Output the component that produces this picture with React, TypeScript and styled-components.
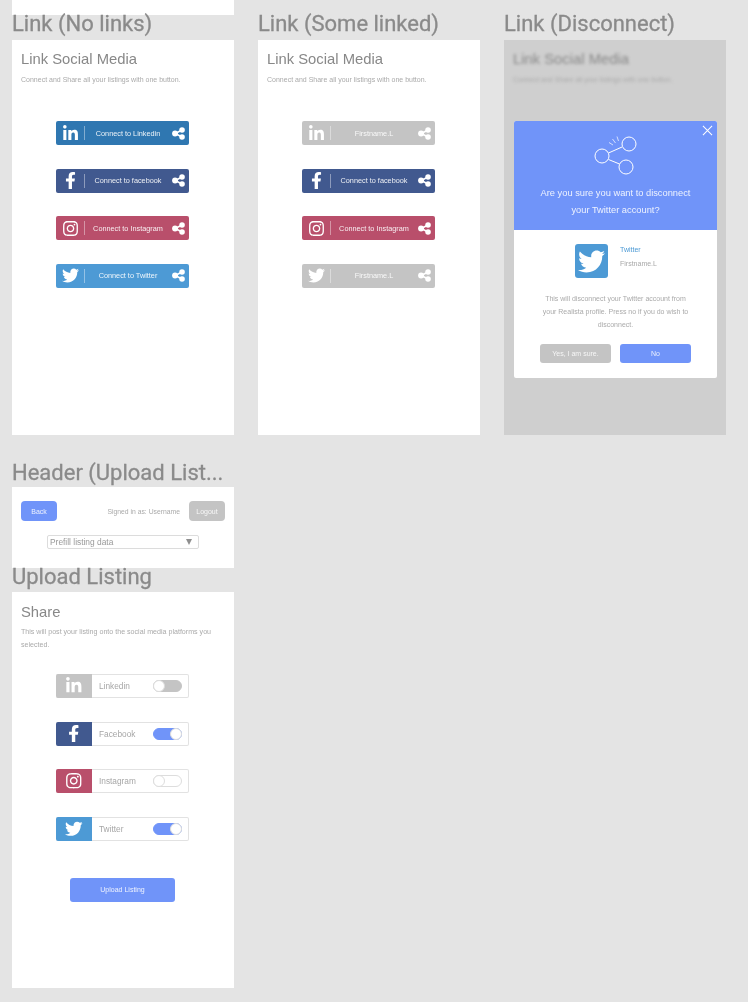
import React from "react";
import styled, { createGlobalStyle } from "styled-components";
import { FaLinkedinIn, FaFacebookF, FaInstagram, FaTwitter } from "react-icons/fa";

const GlobalStyle = createGlobalStyle`
  html, body {
    margin: 0;
    padding: 0;
    background: #e4e4e4;
  }
  body {
    font-family: "Liberation Sans", Arial, sans-serif;
  }
`;

const colors = {
  linkedin: "#2f77b1",
  facebook: "#41598f",
  instagram: "#b94f6b",
  twitter: "#4d9ad5",
  muted: "#c4c4c4",
  primary: "#7094f9",
};

type Network = "linkedin" | "facebook" | "instagram" | "twitter";

const icons = {
  linkedin: FaLinkedinIn,
  facebook: FaFacebookF,
  instagram: FaInstagram,
  twitter: FaTwitter,
};

const ShareGlyph = () => (
  <ShareSvg viewBox="0 0 14 14">
    <path d="M3.5 7 L10.8 3.2 M3.5 7 L10.8 10.8" stroke="#fff" strokeWidth="1.8" />
    <circle cx="3.3" cy="7" r="3.2" fill="#fff" />
    <circle cx="10.8" cy="3.2" r="3" fill="#fff" />
    <circle cx="10.8" cy="10.8" r="3" fill="#fff" />
  </ShareSvg>
);

const LinkButton = ({
  network,
  label,
  linked,
}: {
  network: Network;
  label: string;
  linked?: boolean;
}) => {
  const Icon = icons[network];
  return (
    <ConnectButton $bg={linked ? colors.muted : colors[network]}>
      <IconSlot>
        <Icon />
      </IconSlot>
      <Divider />
      <ConnectLabel>{label}</ConnectLabel>
      <ShareGlyph />
    </ConnectButton>
  );
};

const ToggleRow = ({
  network,
  label,
  state,
}: {
  network: Network;
  label: string;
  state: "off" | "on" | "empty";
}) => {
  const Icon = icons[network];
  return (
    <ShareRow>
      <ShareTile $bg={state === "off" ? colors.muted : colors[network]}>
        <Icon />
      </ShareTile>
      <ShareName>{label}</ShareName>
      <Toggle $state={state}>
        <Knob $on={state === "on"} />
      </Toggle>
    </ShareRow>
  );
};

const Intro = () => (
  <>
    <Title>Link Social Media</Title>
    <Subtitle>Connect and Share all your listings with one button.</Subtitle>
  </>
);

const App = () => (
  <>
    <GlobalStyle />
    <Page>
      <TopStub />
      <TopRow>
        <Column>
          <BoardLabel>Link (No links)</BoardLabel>
          <Board>
            <Intro />
            <ButtonStack>
              <LinkButton network="linkedin" label="Connect to Linkedin" />
              <LinkButton network="facebook" label="Connect to facebook" />
              <LinkButton network="instagram" label="Connect to Instagram" />
              <LinkButton network="twitter" label="Connect to Twitter" />
            </ButtonStack>
          </Board>
        </Column>
        <Column>
          <BoardLabel>Link (Some linked)</BoardLabel>
          <Board>
            <Intro />
            <ButtonStack>
              <LinkButton network="linkedin" label="Firstname.L" linked />
              <LinkButton network="facebook" label="Connect to facebook" />
              <LinkButton network="instagram" label="Connect to Instagram" />
              <LinkButton network="twitter" label="Firstname.L" linked />
            </ButtonStack>
          </Board>
        </Column>
        <Column>
          <BoardLabel>Link (Disconnect)</BoardLabel>
          <DimBoard>
            <Blurred>
              <Intro />
            </Blurred>
            <Modal>
              <ModalHead>
                <CloseIcon viewBox="0 0 12 12">
                  <path d="M1 1 L11 11 M11 1 L1 11" stroke="#fff" strokeWidth="1.1" />
                </CloseIcon>
                <ShareArt viewBox="0 0 44 42" fill="none" stroke="#fff" strokeWidth="1">
                  <circle cx="8" cy="22" r="7" />
                  <circle cx="35" cy="10" r="7" />
                  <circle cx="32" cy="33" r="7" />
                  <path d="M14.5 19 L28 13 M14.5 25.5 L25.5 30" />
                  <path d="M15 8.5 L19 11 M18.5 5 L21.5 9 M23 2.5 L24.5 7" strokeWidth="0.7" />
                </ShareArt>
                <ModalQuestion>
                  Are you sure you want to disconnect
                  <br />
                  your Twitter account?
                </ModalQuestion>
              </ModalHead>
              <ModalBody>
                <AccountRow>
                  <AccountTile>
                    <FaTwitter />
                  </AccountTile>
                  <AccountText>
                    <AccountNetwork>Twitter</AccountNetwork>
                    <AccountName>Firstname.L</AccountName>
                  </AccountText>
                </AccountRow>
                <ModalCopy>
                  This will disconnect your Twitter account from
                  <br />
                  your Realista profile. Press no if you do wish to
                  <br />
                  disconnect.
                </ModalCopy>
                <ModalActions>
                  <PillButton $bg={colors.muted}>Yes, I am sure.</PillButton>
                  <PillButton $bg={colors.primary}>No</PillButton>
                </ModalActions>
              </ModalBody>
            </Modal>
          </DimBoard>
        </Column>
      </TopRow>

      <Column>
        <SecondLabel>Header (Upload List...</SecondLabel>
        <HeaderBoard>
          <HeaderBar>
            <SmallButton $bg={colors.primary}>Back</SmallButton>
            <SignedIn>Signed in as: Username</SignedIn>
            <SmallButton $bg={colors.muted}>Logout</SmallButton>
          </HeaderBar>
          <PrefillSelect>
            <span>Prefill listing data</span>
            <Caret />
          </PrefillSelect>
        </HeaderBoard>
        <UploadLabel>Upload Listing</UploadLabel>
        <UploadBoard>
          <ShareTitle>Share</ShareTitle>
          <ShareCopy>
            This will post your listing onto the social media platforms you selected.
          </ShareCopy>
          <ShareStack>
            <ToggleRow network="linkedin" label="Linkedin" state="off" />
            <ToggleRow network="facebook" label="Facebook" state="on" />
            <ToggleRow network="instagram" label="Instagram" state="empty" />
            <ToggleRow network="twitter" label="Twitter" state="on" />
          </ShareStack>
          <UploadButton>Upload Listing</UploadButton>
        </UploadBoard>
      </Column>
    </Page>
  </>
);

export default App;

// transparent layer: keeps small text on greyscale antialiasing like the mockup export
const Page = styled.div`
  width: 748px;
  height: 1002px;
  box-sizing: border-box;
  padding-left: 12px;
  overflow: hidden;
  will-change: transform;
`;

const TopStub = styled.div`
  width: 222px;
  height: 15px;
  background: #ffffff;
`;

const TopRow = styled.div`
  display: grid;
  grid-template-columns: repeat(3, 222px);
  column-gap: 24px;
`;

const Column = styled.div`
  width: 222px;
  display: flex;
  flex-direction: column;
`;

const BoardLabel = styled.div`
  height: 25px;
  font-family: Roboto, sans-serif;
  font-size: 22px;
  line-height: 18px;
  color: #8a8a8a;
  white-space: nowrap;
  -webkit-text-stroke: 0.3px #8a8a8a;
`;

const SecondLabel = styled(BoardLabel)`
  margin-top: 25px;
  height: 27px;
  line-height: 25px;
`;

const UploadLabel = styled(BoardLabel)`
  height: 24px;
`;

const Board = styled.div`
  height: 395px;
  box-sizing: border-box;
  padding: 12px 9px 0;
  background: #ffffff;
`;

const UploadBoard = styled(Board)`
  height: 396px;
`;

const DimBoard = styled(Board)`
  position: relative;
  background: #cfcfcf;
`;

const Blurred = styled.div`
  filter: blur(1.5px);
`;

const Title = styled.div`
  font-size: 14.8px;
  line-height: 15px;
  color: #888888;
`;

const Subtitle = styled.div`
  margin-top: 8px;
  font-size: 7px;
  line-height: 9px;
  color: #aaaaaa;
  white-space: nowrap;
`;

const ButtonStack = styled.div`
  margin: 37px 0 0 35px;
  display: flex;
  flex-direction: column;
  gap: 23.5px;
`;

const ConnectButton = styled.div<{ $bg: string }>`
  width: 133px;
  height: 24px;
  box-sizing: border-box;
  display: flex;
  align-items: center;
  padding-right: 4px;
  border-radius: 2px;
  background: ${({ $bg }) => $bg};
  color: #ffffff;
`;

const IconSlot = styled.div`
  width: 28px;
  display: flex;
  justify-content: center;
  font-size: 17px;
  line-height: 0;
`;

const Divider = styled.div`
  width: 1px;
  height: 14px;
  background: rgba(255, 255, 255, 0.4);
`;

const ConnectLabel = styled.div`
  flex: 1;
  padding-right: 1px;
  text-align: center;
  font-size: 7.3px;
  white-space: nowrap;
  color: rgba(255, 255, 255, 0.9);
`;

const ShareSvg = styled.svg`
  width: 13px;
  height: 13px;
`;

const Modal = styled.div`
  position: absolute;
  left: 10px;
  top: 81px;
  width: 203px;
  height: 257px;
  display: flex;
  flex-direction: column;
  border-radius: 2px;
  overflow: hidden;
  background: #ffffff;
`;

const ModalHead = styled.div`
  position: relative;
  height: 109px;
  box-sizing: border-box;
  padding-top: 13px;
  display: flex;
  flex-direction: column;
  align-items: center;
  background: ${colors.primary};
`;

const CloseIcon = styled.svg`
  position: absolute;
  top: 4px;
  right: 4px;
  width: 11px;
  height: 11px;
`;

const ShareArt = styled.svg`
  width: 44px;
  height: 42px;
`;

const ModalQuestion = styled.div`
  margin-top: 9px;
  font-size: 9.3px;
  line-height: 17px;
  text-align: center;
  color: rgba(255, 255, 255, 0.88);
`;

const ModalBody = styled.div`
  flex: 1;
  display: flex;
  flex-direction: column;
  align-items: center;
  padding-top: 14px;
`;

const AccountRow = styled.div`
  align-self: flex-start;
  display: flex;
  gap: 12px;
  margin-left: 61px;
`;

const AccountTile = styled.div`
  width: 33px;
  height: 34px;
  flex-shrink: 0;
  display: flex;
  align-items: center;
  justify-content: center;
  border-radius: 3px;
  font-size: 27px;
  color: #ffffff;
  background: ${colors.twitter};
`;

const AccountText = styled.div`
  display: flex;
  flex-direction: column;
  gap: 5px;
  padding-top: 1px;
  font-size: 7px;
  line-height: 9px;
`;

const AccountNetwork = styled.div`
  color: ${colors.twitter};
`;

const AccountName = styled.div`
  color: #a8a8a8;
`;

const ModalCopy = styled.div`
  margin-top: 15px;
  font-size: 7px;
  line-height: 12.8px;
  text-align: center;
  color: #aaaaaa;
`;

const ModalActions = styled.div`
  margin-top: 13px;
  display: flex;
  gap: 9px;
`;

const PillButton = styled.div<{ $bg: string }>`
  width: 71px;
  height: 19px;
  display: flex;
  align-items: center;
  justify-content: center;
  border-radius: 3px;
  font-size: 7px;
  color: rgba(255, 255, 255, 0.85);
  background: ${({ $bg }) => $bg};
`;

const HeaderBoard = styled.div`
  height: 81px;
  box-sizing: border-box;
  padding: 14px 9px 0;
  background: #ffffff;
`;

const HeaderBar = styled.div`
  display: flex;
  align-items: center;
`;

const SmallButton = styled.div<{ $bg: string }>`
  width: 36px;
  height: 20px;
  display: flex;
  align-items: center;
  justify-content: center;
  border-radius: 4px;
  font-size: 7px;
  color: rgba(255, 255, 255, 0.88);
  background: ${({ $bg }) => $bg};
`;

const SignedIn = styled.div`
  flex: 1;
  padding-right: 9px;
  text-align: right;
  font-size: 6.8px;
  color: #aaaaaa;
`;

const PrefillSelect = styled.div`
  margin: 14px 0 0 26px;
  width: 152px;
  height: 14px;
  box-sizing: border-box;
  padding: 0 6px 0 2px;
  display: flex;
  align-items: center;
  justify-content: space-between;
  border: 1px solid #dcdcdc;
  border-radius: 2px;
  font-size: 8.4px;
  color: #999999;
`;

const Caret = styled.div`
  width: 0;
  height: 0;
  border-left: 3.5px solid transparent;
  border-right: 3.5px solid transparent;
  border-top: 6px solid #8f8f8f;
`;

const ShareTitle = styled.div`
  margin-top: 1px;
  font-size: 14.8px;
  line-height: 15px;
  color: #888888;
`;

const ShareCopy = styled.div`
  margin-top: 6px;
  font-size: 7.1px;
  line-height: 12.6px;
  color: #aaaaaa;
`;

const ShareStack = styled.div`
  margin: 23px 0 0 35px;
  display: flex;
  flex-direction: column;
  gap: 23.5px;
`;

const ShareRow = styled.div`
  width: 133px;
  height: 24px;
  box-sizing: border-box;
  display: flex;
  align-items: center;
  border: 1px solid #e2e2e2;
  border-left: none;
  border-radius: 2px;
`;

const ShareTile = styled.div<{ $bg: string }>`
  width: 36px;
  height: 24px;
  flex-shrink: 0;
  display: flex;
  align-items: center;
  justify-content: center;
  border-radius: 2px 0 0 2px;
  font-size: 17.5px;
  color: #ffffff;
  background: ${({ $bg }) => $bg};
`;

const ShareName = styled.div`
  flex: 1;
  padding-left: 7px;
  font-size: 8.3px;
  color: #a6a6a6;
`;

const Toggle = styled.div<{ $state: "off" | "on" | "empty" }>`
  position: relative;
  width: 29px;
  height: 12px;
  margin-right: 6px;
  box-sizing: border-box;
  border-radius: 6px;
  border: 1px solid
    ${({ $state }) =>
      $state === "empty" ? "#dddddd" : $state === "on" ? colors.primary : colors.muted};
  background: ${({ $state }) =>
    $state === "empty" ? "#ffffff" : $state === "on" ? colors.primary : colors.muted};
`;

const Knob = styled.div<{ $on: boolean }>`
  position: absolute;
  top: -1px;
  ${({ $on }) => ($on ? "right: -1px;" : "left: -1px;")}
  width: 12px;
  height: 12px;
  box-sizing: border-box;
  border-radius: 50%;
  border: 1px solid #dddddd;
  background: #ffffff;
`;

const UploadButton = styled.div`
  margin: 37px 0 0 49px;
  width: 105px;
  height: 24px;
  display: flex;
  align-items: center;
  justify-content: center;
  border-radius: 3px;
  font-size: 7px;
  color: rgba(255, 255, 255, 0.88);
  background: ${colors.primary};
`;
